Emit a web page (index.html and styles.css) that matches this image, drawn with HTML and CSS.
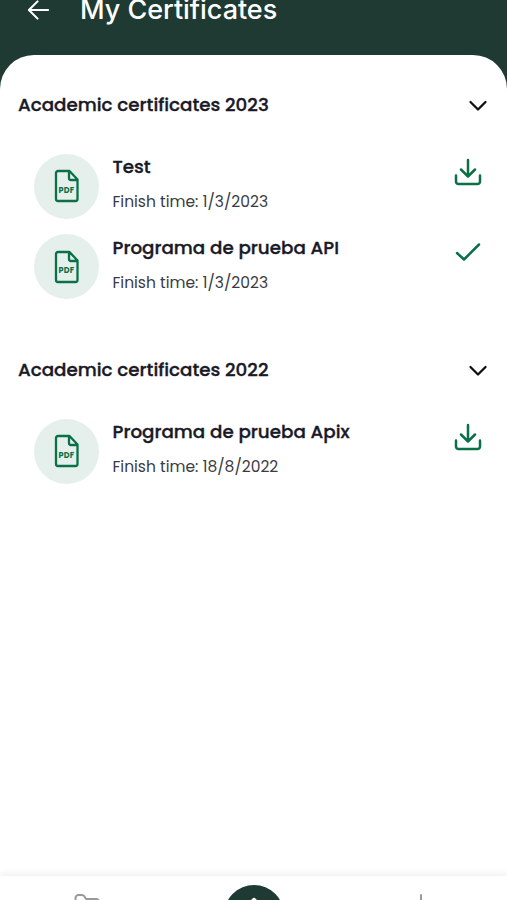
FILE: index.html
```html
<!DOCTYPE html>
<html lang="en">
<head>
<meta charset="utf-8">
<title>My Certificates</title>
<link rel="stylesheet" href="styles.css">
</head>
<body>
<svg class="symbols" aria-hidden="true">
  <symbol id="chevron" viewBox="0 0 20 14"><path d="M2.500 3l7.500 7.500L17.500 3"/></symbol>
  <symbol id="download" viewBox="0 0 28 28"><path d="M14 2v16M7 11.500l7 7 7-7M2 17.500v6a2.500 2.500 0 0 0 2.500 2.500h19a2.500 2.500 0 0 0 2.500-2.500v-6"/></symbol>
  <symbol id="check" viewBox="0 0 28 28"><path d="M3 14l7 6.500L25 5.500"/></symbol>
  <symbol id="file" viewBox="0 0 26 34"><path d="M4 2h11.500l8 8.500V30a2 2 0 0 1-2 2H4a2 2 0 0 1-2-2V4a2 2 0 0 1 2-2zM15 2v7a2 2 0 0 0 2 2h6.500"/></symbol>
</svg>
<div class="screen">
  <header class="topbar">
    <svg class="back" viewBox="0 0 24 20"><path d="M22 10H2.500M11 1L2 10l9 9"/></svg>
    <h1>My Certificates</h1>
  </header>
  <main class="sheet">
    <section class="group">
      <div class="group-head"><h2>Academic certificates 2023</h2><svg class="chevron"><use href="#chevron"/></svg></div>
      <article class="item">
        <div class="badge"><svg><use href="#file"/></svg><span>PDF</span></div>
        <div class="info"><h3>Test</h3><p>Finish time: 1/3/2023</p></div>
        <svg class="action"><use href="#download"/></svg>
      </article>
      <article class="item">
        <div class="badge"><svg><use href="#file"/></svg><span>PDF</span></div>
        <div class="info"><h3>Programa de prueba API</h3><p>Finish time: 1/3/2023</p></div>
        <svg class="action"><use href="#check"/></svg>
      </article>
    </section>
    <section class="group">
      <div class="group-head"><h2>Academic certificates 2022</h2><svg class="chevron"><use href="#chevron"/></svg></div>
      <article class="item">
        <div class="badge"><svg><use href="#file"/></svg><span>PDF</span></div>
        <div class="info"><h3>Programa de prueba Apix</h3><p>Finish time: 18/8/2022</p></div>
        <svg class="action"><use href="#download"/></svg>
      </article>
    </section>
  </main>
  <nav class="tabbar">
    <svg class="tab" viewBox="0 0 26 22"><path d="M1.500 22V4a3 3 0 0 1 3-3h3.500a3 3 0 0 1 2.500 1.500l1.500 2.500h10a3 3 0 0 1 3 3v14"/></svg>
    <div class="home"><svg viewBox="0 0 24 22"><path d="M2 11l10-9 10 9v10H2z"/></svg></div>
    <svg class="tab" viewBox="0 0 26 22"><path d="M13 1v17M6 12l7 7 7-7"/></svg>
  </nav>
</div>
</body>
</html>
```
FILE: styles.css
```css
* { box-sizing: border-box; }
body, h1, h2, h3, p { margin: 0; }
body { font-family: Poppins, Inter, sans-serif; background: #1f3a33; }
svg { display: block; fill: none; stroke: currentColor; stroke-linecap: round; stroke-linejoin: round; }
.symbols { display: none; }
.screen { height: 900px; overflow: hidden; display: flex; flex-direction: column; background: #1f3a33; }
.topbar { height: 55px; flex: none; display: flex; align-items: flex-start; padding-left: 27px; color: #fff; }
.back { width: 23px; height: 20px; stroke-width: 2.2; }
h1 { margin-left: 30px; font: 500 27px/20px Inter, sans-serif; letter-spacing: -0.04px; white-space: nowrap; }
.sheet { flex: 1; background: #fff; border-radius: 34px 34px 0 0; padding-top: 32px; }
.group { margin-bottom: 45px; }
.group-head { height: 35px; display: flex; align-items: center; justify-content: space-between; padding: 0 19px 0 18px; margin-bottom: 24px; }
h2, h3 { font-size: 18.300px; font-weight: 500; color: #191927; white-space: nowrap; -webkit-text-stroke: .35px currentColor; }
h2 { line-height: 28px; }
.chevron { width: 20px; height: 14px; stroke-width: 2.3; color: #111; margin-top: 2px; }
.item { height: 80.500px; display: flex; align-items: center; padding: 0 25px 0 34px; }
.badge { position: relative; width: 65px; height: 65px; flex: none; border-radius: 50%; background: #e5f0ec; display: grid; place-items: center; color: #0b7048; }
.badge svg { width: 26px; height: 34px; stroke-width: 2.3; }
.badge span { position: absolute; left: 0; right: 0; top: 31px; text-align: center; font-size: 8px; line-height: 12px; font-weight: 700; letter-spacing: .2px; }
.info { flex: 1; margin: -6px 0 0 13.500px; }
h3 { line-height: 28px; }
.info p { margin-top: 10px; font-size: 15.500px; line-height: 22px; color: #3b3b43; white-space: nowrap; }
.action { width: 28px; height: 28px; stroke-width: 2.5; color: #0b7048; margin-top: -28px; }
.tabbar { height: 24px; flex: none; display: grid; grid-template-columns: repeat(3, 1fr); justify-items: center; padding: 0 2px 0 3px; background: #fff; box-shadow: 0 -3px 7px rgba(0, 0, 0, .06); }
.tab { width: 26px; height: 22px; margin-top: 18px; color: #999; stroke-width: 2; }
.home { width: 60px; height: 60px; margin-top: 9px; border-radius: 50%; background: #1f3a33; color: #fff; }
.home svg { width: 24px; height: 22px; margin: 12px auto 0; stroke-width: 2.5; }
```
